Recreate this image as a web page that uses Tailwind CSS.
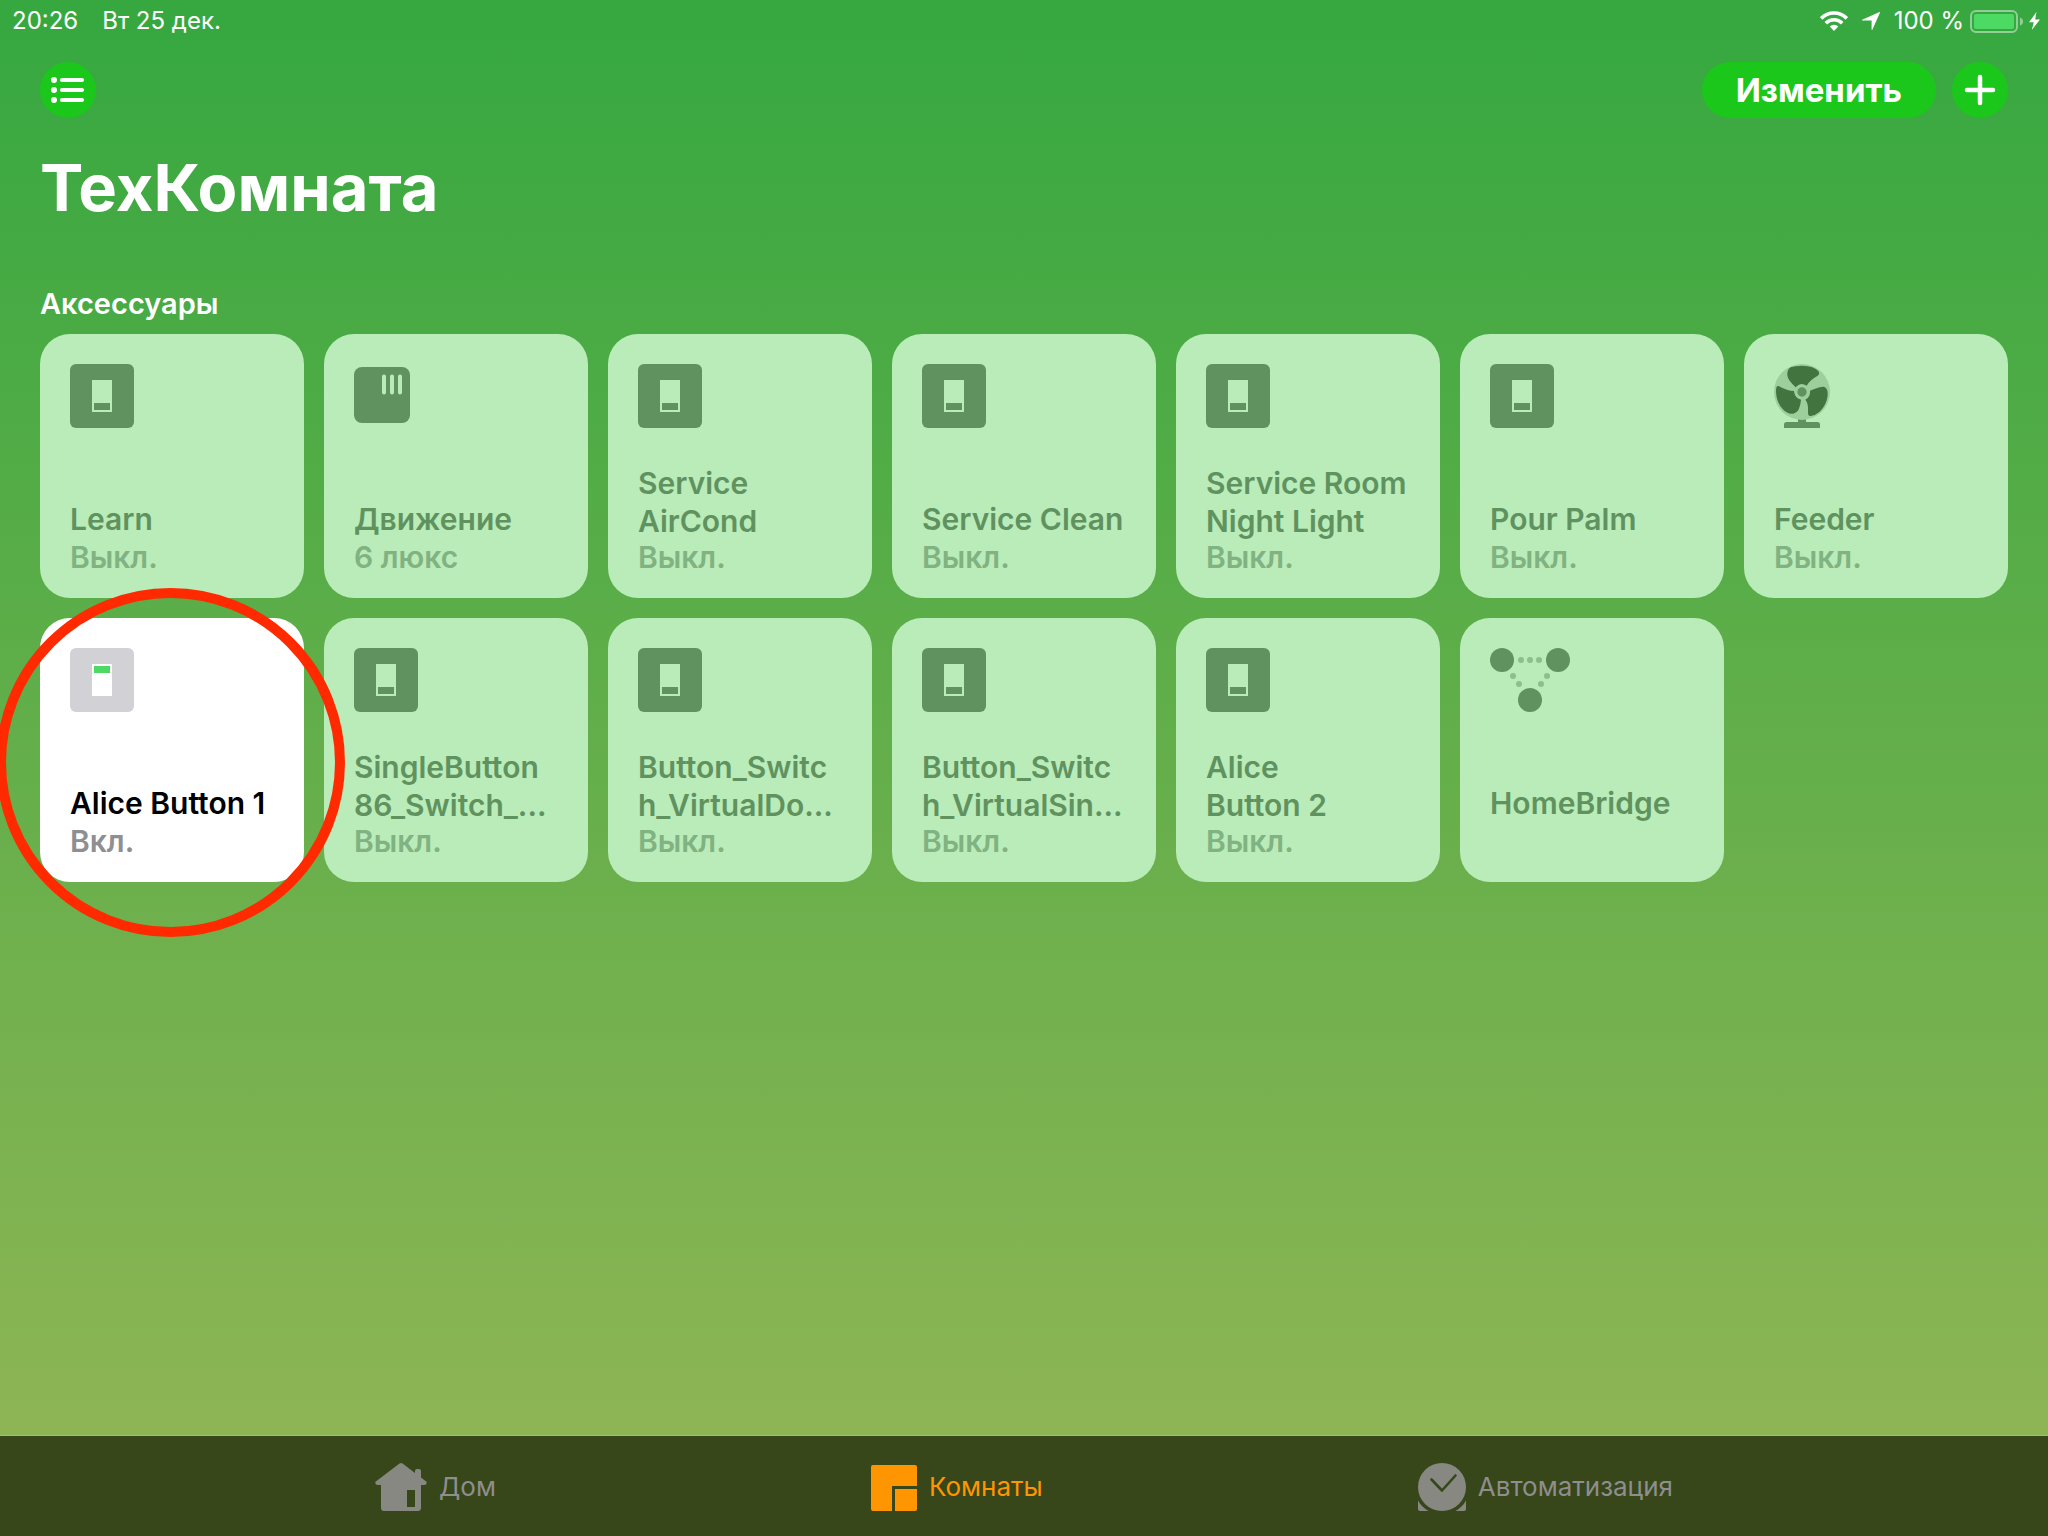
<!DOCTYPE html>
<html lang="ru">
<head>
<meta charset="utf-8">
<meta name="viewport" content="width=device-width, initial-scale=1">
<title>ТехКомната</title>
<script src="https://cdn.jsdelivr.net/npm/@tailwindcss/browser@4"></script>
</head>
<body class="flex min-h-screen flex-col overflow-x-hidden bg-linear-to-b/srgb from-[#37a840] from-2% to-[#94b656] font-['Inter',sans-serif] text-white">

<svg class="hidden" aria-hidden="true">
  <symbol id="switch-off" viewBox="0 0 64 64">
    <rect width="64" height="64" rx="6" fill="#609260"/>
    <rect x="22" y="16" width="20" height="32" fill="#b9ecb9"/>
    <rect x="24" y="39" width="16" height="7" fill="#609260"/>
  </symbol>
  <symbol id="switch-on" viewBox="0 0 64 64">
    <rect width="64" height="64" rx="6" fill="#d1d1d6"/>
    <rect x="22" y="16" width="20" height="32" fill="#fff"/>
    <rect x="24" y="18" width="16" height="7" fill="#4cd964"/>
  </symbol>
</svg>

<div class="flex h-10 items-center justify-between pl-3 pr-2 pt-0.5 text-2xl leading-10">
  <div class="flex gap-6"><span>20:26</span><span>Вт 25 дек.</span></div>
  <div class="flex items-center">
    <svg class="mr-3.5 h-5 w-7" viewBox="0 0 28 20" aria-label="Wi-Fi">
      <g fill="none" stroke="#fff" stroke-width="3.6">
        <path d="M1.2 7.4a18 18 0 0 1 25.6 0"/>
        <path d="M5.8 12.2a11.6 11.6 0 0 1 16.4 0"/>
      </g>
      <path d="M14 20l-4.3-4.5a6.2 6.2 0 0 1 8.6 0z" fill="#fff"/>
    </svg>
    <svg class="mr-3.5 h-[18px] w-[18px]" viewBox="0 0 18 18" aria-label="Геопозиция"><path d="M17 .2c.8-.4 1.2 0 .8.9L10.6 17.300c-.4 1-1 .8-1-.2V8.600H.9c-1 0-1.200-.7-.2-1.100z" fill="#fff"/></svg>
    <span>100 %</span>
    <svg class="ml-1.5 h-[23px] w-[53px]" viewBox="0 0 53 23" aria-label="Батарея заряжена">
      <rect x="1" y="1" width="46" height="21" rx="5" fill="none" stroke="#fff" stroke-opacity=".45" stroke-width="2"/>
      <rect x="4" y="4" width="40" height="15" rx="2" fill="#4cd964"/>
      <path d="M50 7.500q3 1 3 4t-3 4z" fill="#fff" fill-opacity=".45"/>
    </svg>
    <svg class="ml-1.5 h-[18px] w-[11px]" viewBox="0 0 11 18" aria-hidden="true"><path d="M7.500 0L0 10.200h4.800L2.800 18 11 7.500H6.200z" fill="#fff"/></svg>
  </div>
</div>

<main class="flex-1 px-10">
  <header class="mt-[22px] flex items-center justify-between">
    <button class="grid size-14 place-items-center rounded-full bg-[#1cc71c]" aria-label="Список">
      <svg class="h-[26px] w-[34px]" viewBox="0 0 34 26" fill="#fff">
        <circle cx="3" cy="3" r="3"/><circle cx="3" cy="13" r="3"/><circle cx="3" cy="23" r="3"/>
        <rect x="9" y="1" width="24" height="4" rx="2"/><rect x="9" y="11" width="24" height="4" rx="2"/><rect x="9" y="21" width="24" height="4" rx="2"/>
      </svg>
    </button>
    <div class="flex gap-4">
      <button class="h-14 rounded-full bg-[#1cc71c] px-[34px] text-[33px] leading-[56px] font-bold">Изменить</button>
      <button class="grid size-14 place-items-center rounded-full bg-[#1cc71c]" aria-label="Добавить">
        <svg class="size-8" viewBox="0 0 32 32" fill="none" stroke="#fff" stroke-width="4.500" stroke-linecap="round"><path d="M16 3v26M3 16h26"/></svg>
      </button>
    </div>
  </header>

  <h1 class="mt-7 text-[65px] leading-[84px] font-bold">ТехКомната</h1>
  <h2 class="mt-[55px] text-[29px] leading-[38px] font-semibold">Аксессуары</h2>

  <ul class="mt-[11px] grid grid-cols-7 gap-5 text-[30px] leading-[38px] font-semibold whitespace-nowrap text-[#609260]">
    <li><button class="flex aspect-square w-full flex-col items-start justify-between rounded-[30px] bg-[#b9ecb9] px-[30px] pt-[30px] pb-[22px] text-left">
      <svg class="size-16"><use href="#switch-off"/></svg>
      <span>Learn<br><span class="text-[#81b281]">Выкл.</span></span>
    </button></li>
    <li><button class="flex aspect-square w-full flex-col items-start justify-between rounded-[30px] bg-[#b9ecb9] px-[30px] pt-[30px] pb-[22px] text-left">
      <svg class="size-16" viewBox="0 0 64 64">
        <rect y="3" width="56" height="56" rx="8" fill="#609260"/>
        <path d="M30 12.500v16M38 12.500v16M46 12.500v16" stroke="#b9ecb9" stroke-width="4" stroke-linecap="round"/>
      </svg>
      <span>Движение<br><span class="text-[#81b281]">6 люкс</span></span>
    </button></li>
    <li><button class="flex aspect-square w-full flex-col items-start justify-between rounded-[30px] bg-[#b9ecb9] px-[30px] pt-[30px] pb-[22px] text-left">
      <svg class="size-16"><use href="#switch-off"/></svg>
      <span><span class="-mb-0.5 block">Service<br>AirCond</span><span class="text-[#81b281]">Выкл.</span></span>
    </button></li>
    <li><button class="flex aspect-square w-full flex-col items-start justify-between rounded-[30px] bg-[#b9ecb9] px-[30px] pt-[30px] pb-[22px] text-left">
      <svg class="size-16"><use href="#switch-off"/></svg>
      <span>Service Clean<br><span class="text-[#81b281]">Выкл.</span></span>
    </button></li>
    <li><button class="flex aspect-square w-full flex-col items-start justify-between rounded-[30px] bg-[#b9ecb9] px-[30px] pt-[30px] pb-[22px] text-left">
      <svg class="size-16"><use href="#switch-off"/></svg>
      <span><span class="-mb-0.5 block">Service Room<br>Night Light</span><span class="text-[#81b281]">Выкл.</span></span>
    </button></li>
    <li><button class="flex aspect-square w-full flex-col items-start justify-between rounded-[30px] bg-[#b9ecb9] px-[30px] pt-[30px] pb-[22px] text-left">
      <svg class="size-16"><use href="#switch-off"/></svg>
      <span>Pour Palm<br><span class="text-[#81b281]">Выкл.</span></span>
    </button></li>
    <li><button class="flex aspect-square w-full flex-col items-start justify-between rounded-[30px] bg-[#b9ecb9] px-[30px] pt-[30px] pb-[22px] text-left">
      <svg class="h-16 w-14" viewBox="102 102 168 192">
        <path d="M174 264h24v12h34q8 0 8 8v10H132v-10q0-8 8-8h34z" fill="#609260"/>
        <circle cx="186" cy="186" r="84" fill="#9ccf9c"/>
        <g fill="#41743f">
          <path d="M186 107q-22 0-34 5-11 6-10 24 1 14 25 36 8-9 17-10 8 0 16 5 10-17 32-29 9-6 3-15-12-15-49-16z"/>
          <path d="M117 169q-9-4-9 14 0 32 20 54 15 17 32 14 20-4 23-42-12-3-16-11-4-6-5-15-20 0-45-14z"/>
          <path d="M210 182q30-13 42-12 13 5 11 26-3 30-24 49-13 11-27 13-8 0-8-10 2-28-8-39 8-4 12-12 3-7 2-15z"/>
        </g>
        <circle cx="186" cy="186" r="18" fill="#609260" stroke="#9ccf9c" stroke-width="8"/>
      </svg>
      <span>Feeder<br><span class="text-[#81b281]">Выкл.</span></span>
    </button></li>

    <li class="relative"><button class="flex aspect-square w-full flex-col items-start justify-between rounded-[30px] bg-white px-[30px] pt-[30px] pb-[22px] text-left text-black" aria-pressed="true">
      <svg class="size-16"><use href="#switch-on"/></svg>
      <span>Alice Button 1<br><span class="text-[#8e8e93]">Вкл.</span></span>
    </button>
      <div class="pointer-events-none absolute -top-[30px] -left-[44px] z-10 size-[349px] rounded-full border-10 border-[#ff2a00]"></div>
    </li>
    <li><button class="flex aspect-square w-full flex-col items-start justify-between rounded-[30px] bg-[#b9ecb9] px-[30px] pt-[30px] pb-[22px] text-left">
      <svg class="size-16"><use href="#switch-off"/></svg>
      <span><span class="-mb-0.5 block">SingleButton<br>86_Switch_...</span><span class="text-[#81b281]">Выкл.</span></span>
    </button></li>
    <li><button class="flex aspect-square w-full flex-col items-start justify-between rounded-[30px] bg-[#b9ecb9] px-[30px] pt-[30px] pb-[22px] text-left">
      <svg class="size-16"><use href="#switch-off"/></svg>
      <span><span class="-mb-0.5 block">Button_Switc<br>h_VirtualDo...</span><span class="text-[#81b281]">Выкл.</span></span>
    </button></li>
    <li><button class="flex aspect-square w-full flex-col items-start justify-between rounded-[30px] bg-[#b9ecb9] px-[30px] pt-[30px] pb-[22px] text-left">
      <svg class="size-16"><use href="#switch-off"/></svg>
      <span><span class="-mb-0.5 block">Button_Switc<br>h_VirtualSin...</span><span class="text-[#81b281]">Выкл.</span></span>
    </button></li>
    <li><button class="flex aspect-square w-full flex-col items-start justify-between rounded-[30px] bg-[#b9ecb9] px-[30px] pt-[30px] pb-[22px] text-left">
      <svg class="size-16"><use href="#switch-off"/></svg>
      <span><span class="-mb-0.5 block">Alice<br>Button 2</span><span class="text-[#81b281]">Выкл.</span></span>
    </button></li>
    <li><button class="flex aspect-square w-full flex-col items-start justify-between rounded-[30px] bg-[#b9ecb9] px-[30px] pt-[30px] pb-[60px] text-left">
      <svg class="h-16 w-20" viewBox="0 0 80 64">
        <g fill="#609260"><circle cx="12" cy="12" r="12"/><circle cx="68" cy="12" r="12"/><circle cx="40" cy="52" r="12"/></g>
        <g fill="#8dbf8d"><circle cx="31" cy="12" r="3"/><circle cx="40" cy="12" r="3"/><circle cx="49" cy="12" r="3"/><circle cx="23" cy="28" r="3"/><circle cx="29" cy="36" r="3"/><circle cx="57" cy="28" r="3"/><circle cx="51" cy="36" r="3"/></g>
      </svg>
      <span>HomeBridge</span>
    </button></li>
  </ul>
</main>

<nav class="flex h-[101px] items-center justify-evenly border-t border-[#9cc264] bg-[#37471a] pt-0.5 text-[26px] leading-8 text-[#8e8e8e]">
  <a href="#home" class="flex items-center gap-3">
    <svg class="h-12 w-[52px]" viewBox="0 0 52 48" fill="#868881"><path fill-rule="evenodd" d="M24.500.6q1.500-1.200 3 0L40 10V8q0-2 2-2h2q2 0 2 2v6.500l5.500 4.300Q52.500 22 49 22h-3v23q0 3-3 3H9q-3 0-3-3V22H3Q-.5 22 .5 18.800zM32 27v17h8V27z"/></svg>
    <span>Дом</span>
  </a>
  <a href="#rooms" class="flex items-center gap-3 text-[#ff9500]" aria-current="page">
    <svg class="h-12 w-[46px]" viewBox="0 0 46 48" fill="#ff9500"><path d="M2 2h42q2 0 2 2v19H21v25H2q-2 0-2-2V4q0-2 2-2z"/><path d="M24 26h22v20q0 2-2 2H24z"/></svg>
    <span>Комнаты</span>
  </a>
  <a href="#automation" class="flex items-center gap-3">
    <svg class="size-12" viewBox="0 0 48 48"><circle cx="24" cy="24" r="24" fill="#868881"/><path d="M0 37.500Q3.500 44 10.500 48H2q-2 0-2-2zM48 37.500Q44.500 44 37.500 48H46q2 0 2-2z" fill="#868881"/><path d="M13.500 16.500L24 27.500 37.500 12.500" fill="none" stroke="#37471a" stroke-width="2.600" stroke-linecap="round" stroke-linejoin="round"/></svg>
    <span>Автоматизация</span>
  </a>
</nav>
</body>
</html>
